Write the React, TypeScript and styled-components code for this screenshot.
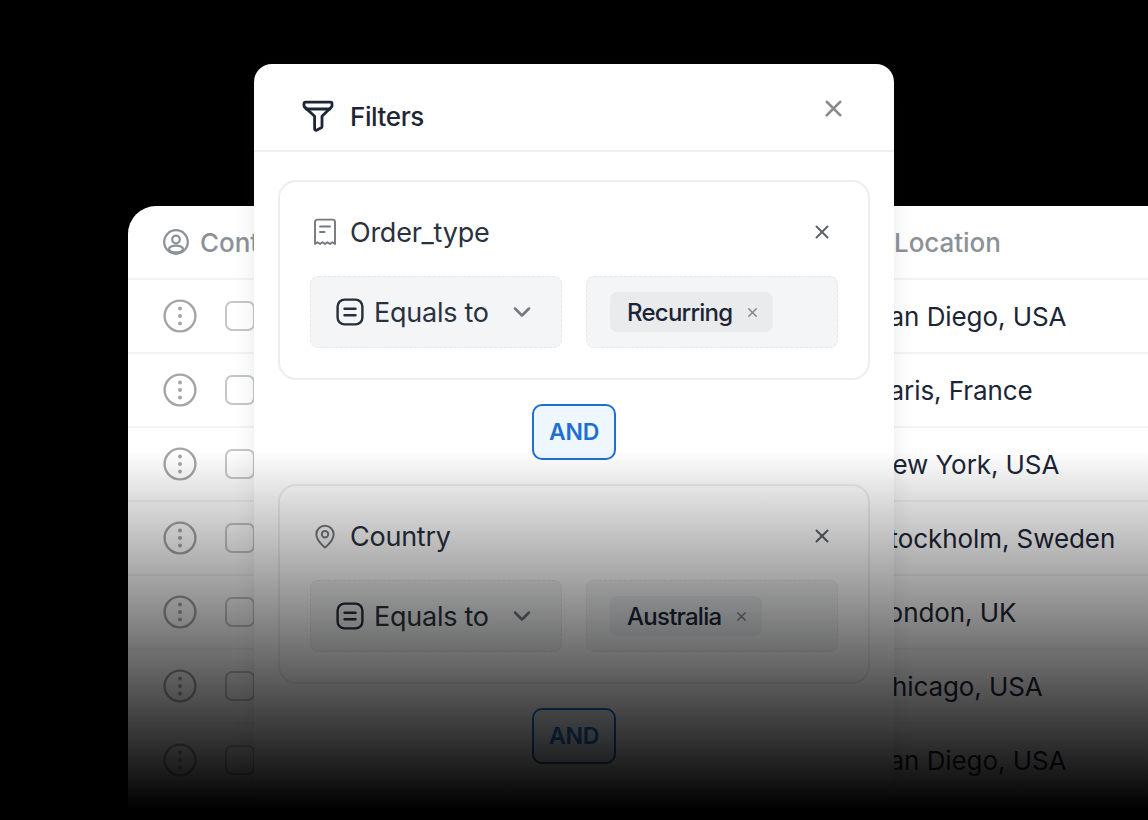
import React from 'react';
import styled, { createGlobalStyle } from 'styled-components';
import { ChevronDown, MapPin, X } from 'lucide-react';

const GlobalStyle = createGlobalStyle`
  html, body {
    margin: 0;
    padding: 0;
    background: #000;
  }
  * {
    box-sizing: border-box;
  }
`;

const Stage = styled.div`
  position: relative;
  width: 1148px;
  height: 820px;
  padding: 206px 0 0 128px;
  overflow: hidden;
  background: #000;
  font-family: Inter, 'Liberation Sans', sans-serif;
  color: #1e2636;
`;

const TableCard = styled.div`
  height: 640px;
  background: #fff;
  border-radius: 28px 0 0 0;
`;

const Row = styled.div`
  display: grid;
  grid-template-columns: 734px 1fr;
  align-items: center;
  height: 74px;
  border-bottom: 2px solid #f3f4f5;
`;

const FirstCell = styled.div<{ $muted?: boolean }>`
  display: flex;
  align-items: center;
  padding-left: 35px;
  color: ${(p) => (p.$muted ? '#8c9198' : 'inherit')};
`;

const HeaderLabel = styled.span`
  margin-left: 11px;
  font-size: 26px;
  font-weight: 500;
  letter-spacing: -0.05px;
  color: #8c9198;
`;

const HeaderLocation = styled.div`
  display: flex;
  align-items: center;
  gap: 6px;
  color: #8c9198;
`;

const LocationLabel = styled(HeaderLabel)`
  margin-left: 0;
`;

const Check = styled.span`
  width: 30px;
  height: 30px;
  margin-left: 28px;
  border: 2px solid #c4c6c8;
  border-radius: 7px;
`;

const Place = styled.div`
  padding-left: 11px;
  font-size: 26px;
  letter-spacing: -0.08px;
  color: #1c2536;
`;

const Modal = styled.section`
  position: absolute;
  left: 254px;
  top: 64px;
  width: 640px;
  height: 780px;
  background: #fff;
  border-radius: 18px 18px 0 0;
  box-shadow: 0 0 22px rgba(30, 40, 60, 0.1);
`;

const ModalHeader = styled.header`
  display: flex;
  align-items: center;
  height: 88px;
  padding: 18px 47px 0 48px;
  border-bottom: 2px solid #eff0f1;
`;

const ModalTitle = styled.h2`
  flex: 1;
  margin: 0 0 0 16px;
  font-size: 26px;
  font-weight: 500;
  letter-spacing: -0.4px;
  color: #1e2636;
`;

const ModalClose = styled.span`
  display: flex;
  margin-top: -16px;
  color: #858b8f;
`;

const ModalBody = styled.div`
  display: flex;
  flex-direction: column;
  align-items: center;
  gap: 24px;
  padding: 28px 24px 0;
`;

const FilterCard = styled.div`
  width: 592px;
  height: 200px;
  padding: 30px 30px 0;
  border: 2px solid #eceef0;
  border-radius: 18px;
`;

const FilterTitle = styled.div`
  display: flex;
  align-items: center;
  height: 40px;
  padding-left: 2px;
  color: #75797f;
`;

const IconSlot = styled.span`
  display: flex;
  justify-content: center;
  width: 26px;
`;

const FilterName = styled.span`
  flex: 1;
  margin-left: 12px;
  font-size: 27px;
  letter-spacing: -0.25px;
  color: #2a3240;
`;

const FilterClose = styled.span`
  display: flex;
  margin-right: 5px;
  color: #5e6469;
`;

const Controls = styled.div`
  display: flex;
  gap: 24px;
  margin-top: 24px;
`;

const Control = styled.div`
  display: flex;
  align-items: center;
  width: 252px;
  height: 72px;
  background: #f4f5f6;
  border: 1px dashed #e6e8ea;
  border-radius: 8px;
`;

const OperatorControl = styled(Control)`
  padding-left: 25px;
`;

const ValueControl = styled(Control)`
  padding-left: 23px;
`;

const OperatorLabel = styled.span`
  margin-left: 10px;
  font-size: 27px;
  letter-spacing: -0.25px;
  color: #2a3240;
`;

const Chevron = styled.span`
  display: flex;
  margin-left: 19px;
  color: #737a80;
`;

const Tag = styled.span`
  display: flex;
  align-items: center;
  gap: 13px;
  height: 40px;
  padding: 0 13px 0 17px;
  background: #e9ebed;
  border-radius: 7px;
  font-size: 24px;
  font-weight: 500;
  letter-spacing: -0.75px;
  color: #1c2536;
`;

const TagClose = styled.span`
  display: flex;
  color: #81878c;
`;

const AndButton = styled.button`
  width: 84px;
  height: 56px;
  padding: 0;
  background: #eff7fe;
  border: 2px solid #1f6fd2;
  border-radius: 10px;
  font-family: inherit;
  font-size: 23px;
  font-weight: 600;
  letter-spacing: -0.2px;
  color: #1f6fd2;
`;

const Fade = styled.div`
  position: absolute;
  left: 0;
  right: 0;
  top: 450px;
  bottom: 0;
  background: linear-gradient(to bottom, rgba(0, 0, 0, 0) 0, rgba(0, 0, 0, 1) 360px);
  pointer-events: none;
`;

const UserIcon = () => (
  <svg width="26" height="26" viewBox="0 0 26 26" fill="none" stroke="currentColor" strokeWidth="2.2">
    <circle cx="13" cy="13" r="11.8" />
    <circle cx="13" cy="10.5" r="3.8" />
    <ellipse cx="13" cy="20" rx="7" ry="3.4" />
  </svg>
);

const MoreIcon = () => (
  <svg width="34" height="34" viewBox="0 0 34 34" fill="none">
    <circle cx="17" cy="17" r="15.4" stroke="#a3a5a7" strokeWidth="2.4" />
    <circle cx="17" cy="9.5" r="2" fill="#a3a5a7" />
    <circle cx="17" cy="17" r="2" fill="#a3a5a7" />
    <circle cx="17" cy="24.5" r="2" fill="#a3a5a7" />
  </svg>
);

const FunnelIcon = () => (
  <svg width="32" height="32" viewBox="0 0 32 32" fill="none" stroke="#1e2636" strokeWidth="2.8" strokeLinejoin="round" strokeLinecap="round">
    <path d="M2 3.500c0-.8.6-1.400 1.400-1.400h25.200c.8 0 1.400.6 1.400 1.400v2.200c0 .5-.2.9-.5 1.200L20 16.200v10.300c0 .6-.3 1-.8 1.300l-4.700 2.400c-.9.4-1.900-.2-1.900-1.200V16.200L2.500 6.900c-.3-.3-.5-.7-.5-1.200z" />
    <path d="M4 9h24" />
  </svg>
);

const ReceiptIcon = () => (
  <svg width="24" height="28" viewBox="0 0 24 28" fill="none" stroke="currentColor" strokeWidth="1.9" strokeLinecap="round" strokeLinejoin="round">
    <path d="M2 26V4a2.400 2.400 0 0 1 2.400-2.400h15.200A2.400 2.400 0 0 1 22 4v22l-2.500-1.800-2.500 1.800-2.500-1.800-2.500 1.800-2.500-1.800L7 26l-2.500-1.800z" />
    <path d="M7 8.500h10M7 14h4.500" />
  </svg>
);

const EqualsIcon = () => (
  <svg width="28" height="28" viewBox="0 0 28 28" fill="none" stroke="#262e3c" strokeWidth="2.4" strokeLinecap="round">
    <rect x="1.6" y="1.6" width="24.8" height="24.8" rx="7" />
    <path d="M8.500 10.800h11M8.500 17.200h11" />
  </svg>
);

const locations = [
  'San Diego, USA',
  'Paris, France',
  'New York, USA',
  'Stockholm, Sweden',
  'London, UK',
  'Chicago, USA',
  'San Diego, USA',
];

const filters = [
  { name: 'Order_type', icon: <ReceiptIcon />, value: 'Recurring' },
  { name: 'Country', icon: <MapPin size={27} strokeWidth={1.8} />, value: 'Australia' },
];

const App: React.FC = () => (
  <>
    <GlobalStyle />
    <Stage>
      <TableCard>
        <Row>
          <FirstCell $muted>
            <UserIcon />
            <HeaderLabel>Contact</HeaderLabel>
          </FirstCell>
          <HeaderLocation>
            <MapPin size={26} />
            <LocationLabel>Location</LocationLabel>
          </HeaderLocation>
        </Row>
        {locations.map((place, i) => (
          <Row key={i}>
            <FirstCell>
              <MoreIcon />
              <Check />
            </FirstCell>
            <Place>{place}</Place>
          </Row>
        ))}
      </TableCard>

      <Modal>
        <ModalHeader>
          <FunnelIcon />
          <ModalTitle>Filters</ModalTitle>
          <ModalClose>
            <X size={27} strokeWidth={2.2} />
          </ModalClose>
        </ModalHeader>
        <ModalBody>
          {filters.map((filter) => (
            <React.Fragment key={filter.name}>
              <FilterCard>
                <FilterTitle>
                  <IconSlot>{filter.icon}</IconSlot>
                  <FilterName>{filter.name}</FilterName>
                  <FilterClose>
                    <X size={22} strokeWidth={2.2} />
                  </FilterClose>
                </FilterTitle>
                <Controls>
                  <OperatorControl>
                    <EqualsIcon />
                    <OperatorLabel>Equals to</OperatorLabel>
                    <Chevron>
                      <ChevronDown size={28} strokeWidth={2.2} />
                    </Chevron>
                  </OperatorControl>
                  <ValueControl>
                    <Tag>
                      {filter.value}
                      <TagClose>
                        <X size={15} strokeWidth={2.4} />
                      </TagClose>
                    </Tag>
                  </ValueControl>
                </Controls>
              </FilterCard>
              <AndButton>AND</AndButton>
            </React.Fragment>
          ))}
        </ModalBody>
      </Modal>

      <Fade />
    </Stage>
  </>
);

export default App;
